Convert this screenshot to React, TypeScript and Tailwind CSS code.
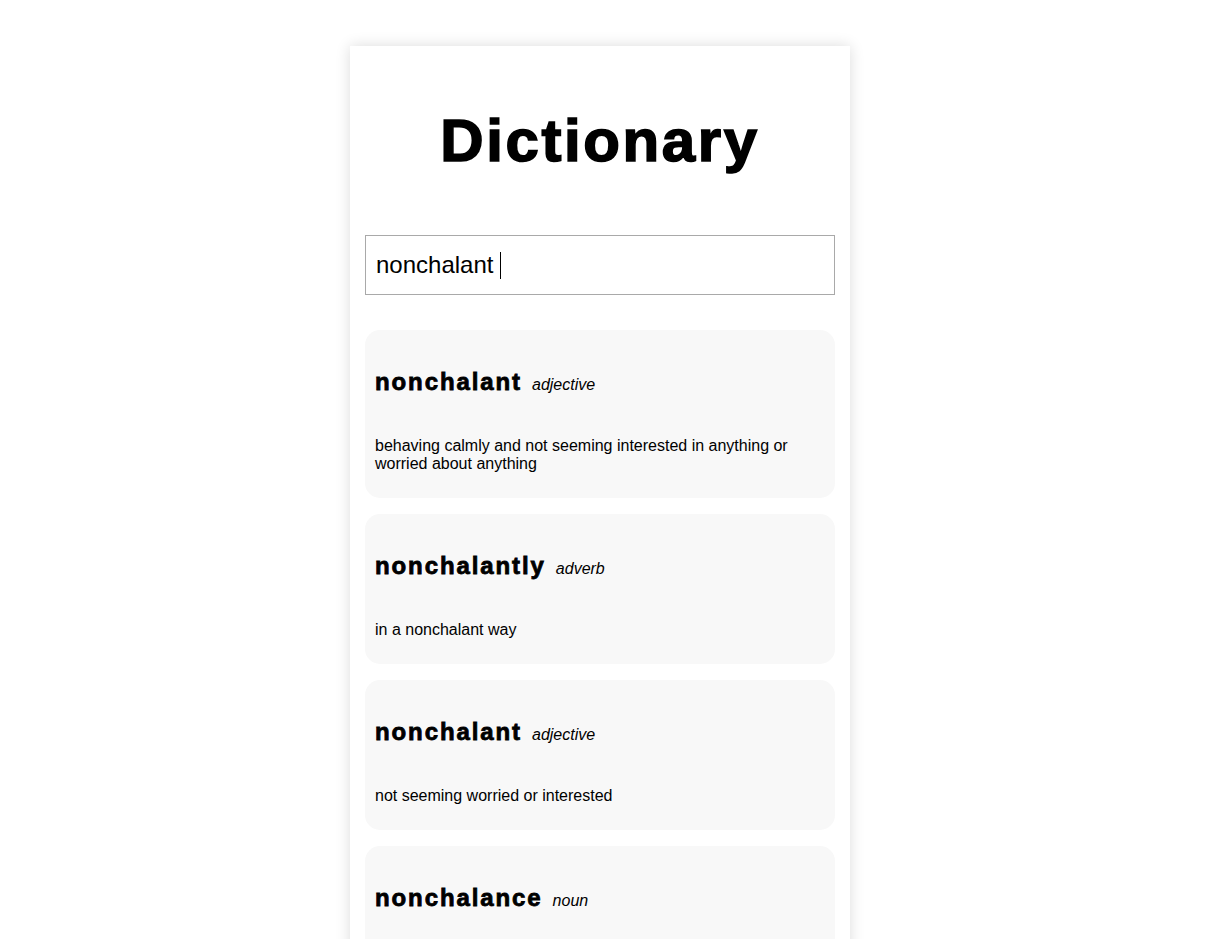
const results = [
  {
    word: "nonchalant",
    pos: "adjective",
    def: "behaving calmly and not seeming interested in anything or worried about anything",
  },
  { word: "nonchalantly", pos: "adverb", def: "in a nonchalant way" },
  { word: "nonchalant", pos: "adjective", def: "not seeming worried or interested" },
  { word: "nonchalance", pos: "noun", def: "the quality of being nonchalant" },
];

function ResultCard({ word, pos, def }: { word: string; pos: string; def: string }) {
  return (
    <div className="rounded-[15px] bg-[#f8f8f8] px-[10px] pt-[38px] pb-[25px]">
      <div className="flex items-baseline gap-[10px]">
        <h2 className="text-[24px] leading-[28px] font-bold tracking-[1.9px] text-black [-webkit-text-stroke:0.8px_black]">
          {word}
        </h2>
        <span className="text-[16px] leading-[18px] italic text-black">{pos}</span>
      </div>
      <p className="mt-[41px] text-[16px] leading-[18px] text-black">{def}</p>
    </div>
  );
}

export default function App() {
  return (
    <div className="min-h-screen bg-white font-['Liberation_Sans',Arial,sans-serif]">
      <div className="ml-[350px] mt-[46px] w-[500px] min-h-[893px] bg-white px-[15px] pb-[20px] shadow-[0_0_14px_rgba(0,0,0,0.14)]">
        {/* Title */}
        <h1 className="pt-[60px] text-center text-[60px] leading-[70px] font-bold tracking-[2.6px] text-black [-webkit-text-stroke:1.6px_black]">
          Dictionary
        </h1>

        {/* Search box */}
        <div className="mt-[59px] flex h-[60px] items-center border border-[#a9a9a9] px-[10px]">
          <span className="text-[24px] text-black whitespace-pre">nonchalant </span>
          <span className="h-[27px] w-px bg-black" />
        </div>

        {/* Results */}
        <div className="mt-[35px] flex flex-col gap-[16px]">
          {results.map((r, i) => (
            <ResultCard key={i} {...r} />
          ))}
        </div>
      </div>
    </div>
  );
}
